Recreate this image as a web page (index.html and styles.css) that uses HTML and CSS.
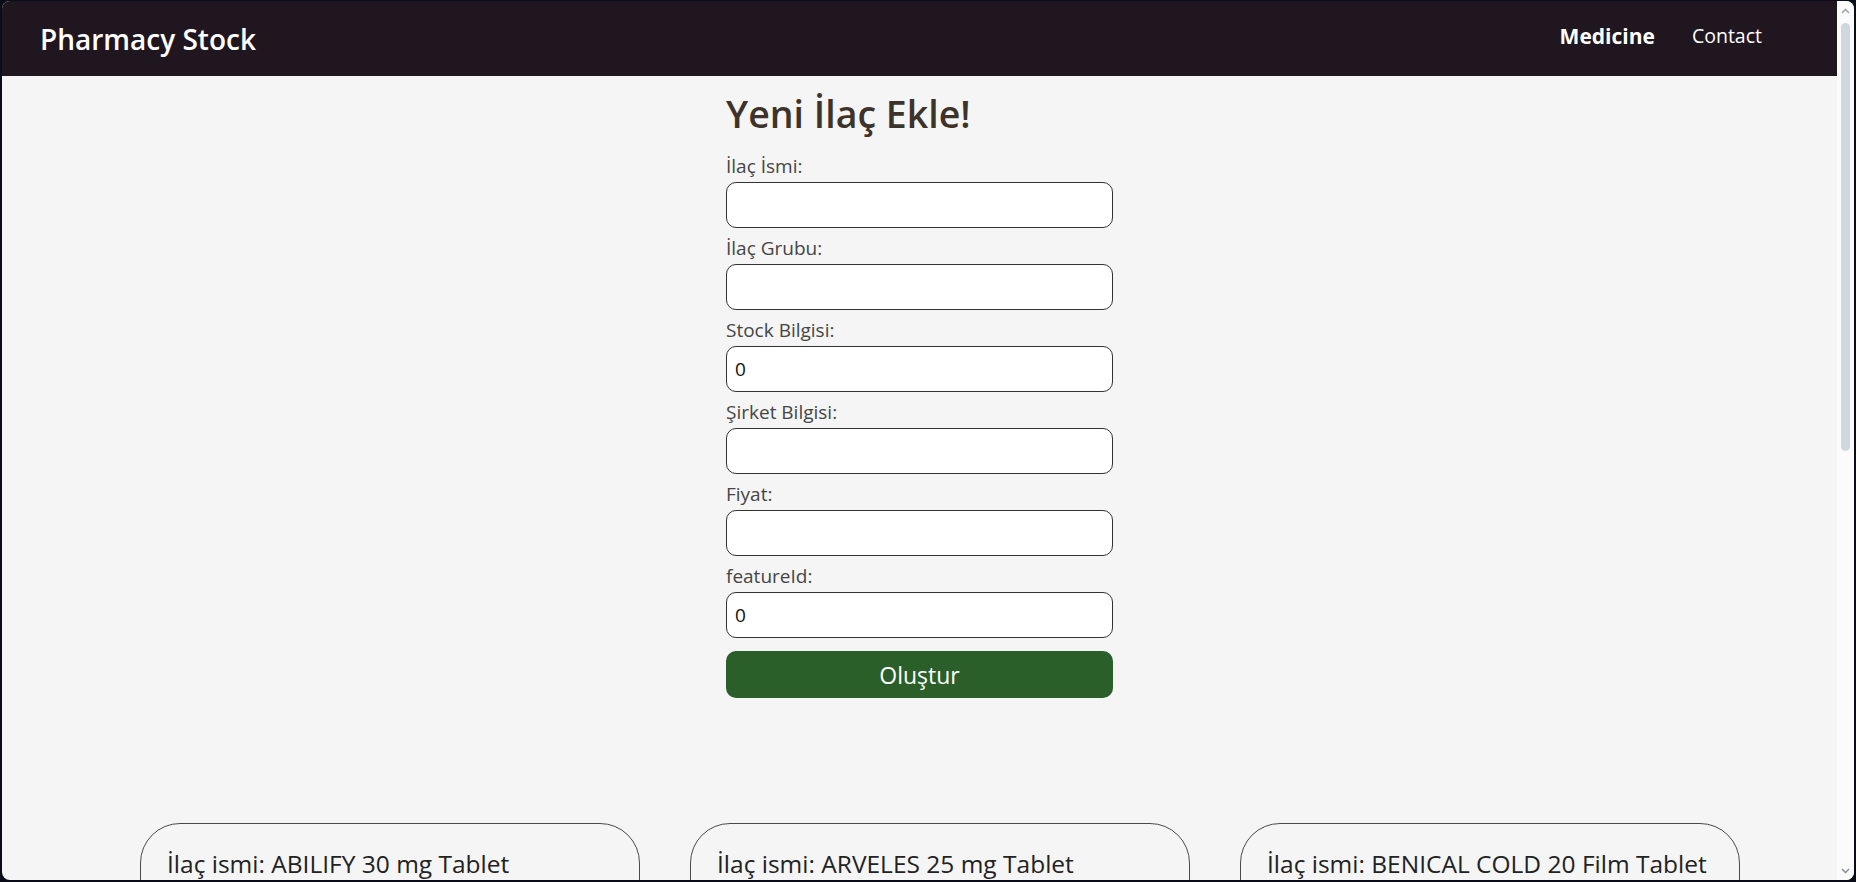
FILE: index.html
```html
<!DOCTYPE html>
<html lang="tr">
<head>
<meta charset="utf-8">
<title>Pharmacy Stock</title>
<link rel="stylesheet" href="styles.css">
</head>
<body>
<div class="frame">
  <div class="window">
    <div class="page">
      <nav class="navbar">
        <div class="brand">Pharmacy Stock</div>
        <div class="links">
          <a class="link active" href="#">Medicine</a>
          <a class="link" href="#">Contact</a>
        </div>
      </nav>
      <main class="content">
        <form class="add-form">
          <h1 class="title">Yeni İlaç Ekle!</h1>
          <label class="field-label">İlaç İsmi:</label>
          <input class="field-input" type="text">
          <label class="field-label">İlaç Grubu:</label>
          <input class="field-input" type="text">
          <label class="field-label">Stock Bilgisi:</label>
          <input class="field-input" type="text" value="0">
          <label class="field-label">Şirket Bilgisi:</label>
          <input class="field-input" type="text">
          <label class="field-label">Fiyat:</label>
          <input class="field-input" type="text">
          <label class="field-label">featureId:</label>
          <input class="field-input" type="text" value="0">
          <button class="submit" type="button">Oluştur</button>
        </form>
        <section class="cards">
          <div class="card">
            <h3 class="card-title">İlaç ismi: ABILIFY 30 mg Tablet</h3>
          </div>
          <div class="card">
            <h3 class="card-title">İlaç ismi: ARVELES 25 mg Tablet</h3>
          </div>
          <div class="card">
            <h3 class="card-title">İlaç ismi: BENICAL COLD 20 Film Tablet</h3>
          </div>
        </section>
      </main>
    </div>
    <div class="scrollbar">
      <svg class="sb-arrow" width="9" height="6" viewBox="0 0 9 6"><polyline points="1,5 4.5,1.5 8,5" fill="none" stroke="#a3a8ad" stroke-width="1.6"/></svg>
      <div class="sb-thumb"></div>
      <div class="sb-space"></div>
      <svg class="sb-arrow" width="9" height="6" viewBox="0 0 9 6"><polyline points="1,1 4.5,4.5 8,1" fill="none" stroke="#8f959b" stroke-width="1.6"/></svg>
    </div>
  </div>
</div>
</body>
</html>
```

FILE: styles.css
```css
html, body {
  margin: 0;
  height: 100%;
}

body {
  background: #0a0d18;
  overflow: hidden;
  font-family: "Open Sans", "Noto Sans", sans-serif;
}

.frame {
  height: 882px;
  box-sizing: border-box;
  padding: 1px 2px 2px 2px;
}

.window {
  height: 100%;
  display: flex;
  border-radius: 8px;
  overflow: hidden;
  background: #f5f5f5;
}

.page {
  flex: 1;
  min-width: 0;
  overflow: hidden;
}

/* navbar */
.navbar {
  height: 75px;
  background: #201620;
  display: flex;
  align-items: center;
  justify-content: space-between;
  padding: 0 75px 0 38px;
}

.brand {
  color: #ffffff;
  font-size: 28px;
  font-weight: 600;
}

.links {
  display: flex;
  align-items: center;
  gap: 37px;
  margin-top: -6px;
}

.link {
  color: #ffffff;
  text-decoration: none;
  font-size: 19.5px;
}

.link.active {
  font-size: 21px;
  font-weight: 700;
}

/* form */
.add-form {
  width: 387px;
  margin: 0 auto;
  display: flex;
  flex-direction: column;
}

.title {
  margin: 13px 0 7px;
  font-size: 37.5px;
  line-height: 50px;
  font-weight: 600;
  color: #3d332b;
}

.field-label {
  font-size: 19px;
  line-height: 26px;
  color: #454545;
  margin: 7px 0 3px;
}

.field-input {
  height: 46px;
  box-sizing: border-box;
  border: 1px solid #333333;
  border-radius: 10px;
  padding: 0 8px;
  font-family: inherit;
  font-size: 19px;
  color: #111111;
  background: #ffffff;
  outline: none;
}

.submit {
  margin-top: 13px;
  height: 47px;
  border: none;
  border-radius: 10px;
  background: #2a5f2a;
  color: #ffffff;
  font-family: inherit;
  font-size: 23px;
}

/* cards */
.cards {
  display: flex;
  gap: 50px;
  margin-top: 125px;
  padding-left: 138px;
}

.card {
  width: 500px;
  min-height: 200px;
  flex: none;
  box-sizing: border-box;
  border: 1px solid #4a4a4a;
  border-radius: 40px;
  padding: 24px 26px;
}

.card-title {
  margin: 0;
  font-size: 24.5px;
  line-height: 32px;
  font-weight: 400;
  color: #222222;
}

/* fake scrollbar */
.scrollbar {
  width: 17px;
  flex: none;
  background: #fbfbfb;
  display: flex;
  flex-direction: column;
  align-items: center;
  padding: 7px 0 6px;
  box-sizing: border-box;
}

.sb-thumb {
  width: 9px;
  height: 428px;
  margin-top: 9px;
  border-radius: 5px;
  background: #cfd8df;
}

.sb-space {
  flex: 1;
}
```
